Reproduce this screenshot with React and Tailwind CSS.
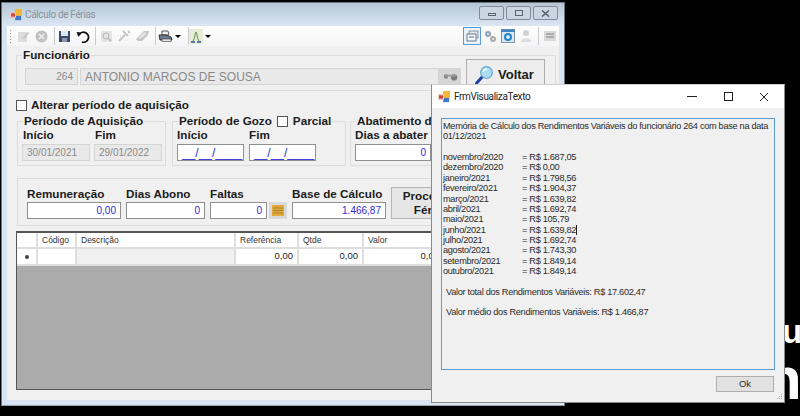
const months = [
  ['novembro/2020', '1.687,05'],
  ['dezembro/2020', '0,00'],
  ['janeiro/2021', '1.798,56'],
  ['fevereiro/2021', '1.904,37'],
  ['março/2021', '1.639,82'],
  ['abril/2021', '1.692,74'],
  ['maio/2021', '105,79'],
  ['junho/2021', '1.639,82'],
  ['julho/2021', '1.692,74'],
  ['agosto/2021', '1.743,30'],
  ['setembro/2021', '1.849,14'],
  ['outubro/2021', '1.849,14'],
]

const AppIcon = () => (
  <svg width="12" height="12" viewBox="0 0 14 14" className="shrink-0">
    <rect x="6" y="0" width="8" height="8" fill="#f2b632" />
    <rect x="0" y="4" width="7" height="6" fill="#d8433a" />
    <rect x="6" y="8" width="7" height="5" fill="#3f78c8" />
    <rect x="0.5" y="4.5" width="6" height="5" fill="none" stroke="#f3e9e0" strokeWidth="1" />
  </svg>
)

const Sep = ({ className = '' }) => <div className={`w-px h-[18px] bg-[#c8ccd0] shrink-0 ${className}`} />

const Arrow = ({ className = '' }) => (
  <div className={`w-0 h-0 border-x-[3px] border-x-transparent border-t-[3px] border-t-black shrink-0 ${className}`} />
)

const Slot = ({ w, children }) => (
  <div className="flex items-center justify-center h-full shrink-0" style={{ width: w }}>
    {children}
  </div>
)

const Toolbar = () => (
  <div className="h-5 flex items-center bg-gradient-to-b from-white to-[#f4f5f6] pl-[2px]">
    <div className="flex flex-col gap-[2px] ml-px shrink-0">
      {[0, 1, 2, 3, 4].map((i) => <div key={i} className="w-px h-px bg-[#8a8a8a]" />)}
    </div>
    <svg width="13" height="13" viewBox="0 0 13 13" className="ml-[6px] shrink-0"><rect x="1" y="2" width="9" height="10" fill="#dcdcdc" /><path d="M6 8 11 2l1 1-5 6z" fill="#bdbdbd" /></svg>
    <svg width="13" height="13" viewBox="0 0 13 13" className="ml-[5px] shrink-0"><circle cx="6.5" cy="6.5" r="6" fill="#c2c2c2" /><path d="M4 4l5 5M9 4l-5 5" stroke="#eee" strokeWidth="1.5" /></svg>
    <Sep className="ml-[6px]" />
    <svg width="13" height="13" viewBox="0 0 13 13" className="ml-[3px] shrink-0"><rect x="1" y="1" width="11" height="11" fill="#3b4a6b" /><rect x="3" y="1" width="7" height="5" fill="#dfe6f0" /><rect x="4" y="8" width="5" height="4" fill="#8c97ad" /></svg>
    <svg width="14" height="14" viewBox="0 0 14 14" fill="none" className="ml-[5px] shrink-0"><path d="M3 6 A5 5 0 1 1 6 13" stroke="#111" strokeWidth="1.8" /><path d="M0.5 3 L5.5 3.5 L2.5 8 Z" fill="#111" /></svg>
    <Sep className="ml-[5px]" />
    <svg width="13" height="13" viewBox="0 0 13 13" fill="none" className="ml-[4px] shrink-0"><rect x="1" y="1" width="11" height="11" fill="#e4e4e4" /><circle cx="6" cy="6" r="3" stroke="#b5b5b5" /><path d="M8 8l3 3" stroke="#b5b5b5" strokeWidth="1.5" /></svg>
    <svg width="15" height="14" viewBox="0 0 15 14" fill="none" className="ml-[4px] shrink-0"><path d="M2 12 8 6M6 2l5 5M11 2l2 2" stroke="#c6c6c6" strokeWidth="2" /><path d="M1 7h3M8 11h4" stroke="#d8d8d8" strokeDasharray="1 1" /></svg>
    <svg width="15" height="12" viewBox="0 0 15 12" className="ml-[3px] shrink-0"><path d="M1 9 9 1h5l-1 4-6 6H3z" fill="#c4c4c4" /><path d="M3 8l6-6 3 1-6 6z" fill="#e2e2e2" /></svg>
    <Sep className="ml-[5px]" />
    <svg width="15" height="14" viewBox="0 0 15 14" className="ml-[2px] shrink-0"><path d="M4 2h6l1 4H4z" fill="#eef2f7" stroke="#555" /><path d="M1 6h7l5 2 1 3H2z" fill="#6b7a90" stroke="#333" /><rect x="4" y="10" width="9" height="2.5" fill="#e8e8e8" stroke="#333" strokeWidth="0.6" /></svg>
    <Arrow className="ml-[2px]" />
    <Sep className="ml-[7px]" />
    <svg width="14" height="15" viewBox="0 0 14 15" fill="none" className="shrink-0"><rect x="0" y="0" width="14" height="15" fill="#e7ecd8" /><path d="M4 12C6 10 6 3 7 3s1 7 3 9" stroke="#5b8f3c" /><path d="M2 13h4M8 13h4" stroke="#2a4f9e" strokeWidth="1.5" /></svg>
    <Arrow className="ml-[2px]" />
    <div className="flex-1" />
    <div className="w-[18px] h-[18px] border border-[#5b9bd5] bg-[#eaf3fb] flex items-center justify-center shrink-0">
      <svg width="13" height="12" viewBox="0 0 13 12" fill="none"><rect x="3" y="1" width="9" height="7" fill="#e5e5e5" stroke="#8d98a5" /><rect x="1" y="4" width="9" height="7" fill="#f3f3f3" stroke="#6f7d8c" /><path d="M3 7h5" stroke="#3f78c8" /></svg>
    </div>
    <Slot w={18}>
      <svg width="13" height="13" viewBox="0 0 13 13"><circle cx="4" cy="4" r="3" fill="#8fa3b8" /><circle cx="4" cy="4" r="1" fill="#eef" /><circle cx="9" cy="9" r="3" fill="#a9a9a9" /><circle cx="9" cy="9" r="1" fill="#eee" /></svg>
    </Slot>
    <Slot w={18}>
      <svg width="14" height="14" viewBox="0 0 14 14" fill="none"><rect x="0.5" y="0.5" width="13" height="13" fill="#dce8f2" stroke="#7c93a8" /><rect x="0.5" y="0.5" width="13" height="2.5" fill="#3f86c6" /><circle cx="7" cy="8" r="3" stroke="#1f83c9" strokeWidth="2" /></svg>
    </Slot>
    <Slot w={18}>
      <svg width="12" height="14" viewBox="0 0 12 14"><circle cx="6" cy="4" r="3" fill="#d2d2d2" /><path d="M1 13c0-5 10-5 10 0z" fill="#dcdcdc" /></svg>
    </Slot>
    <Slot w={6}><Sep /></Slot>
    <Slot w={18}>
      <svg width="12" height="12" viewBox="0 0 12 12"><rect x="0" y="1" width="12" height="10" fill="#d8d8d8" /><path d="M2 4h8M2 7h8" stroke="#9d9d9d" strokeWidth="1.5" /></svg>
    </Slot>
  </div>
)

// campo de texto no estilo WinForms
const Field = ({ w, value, disabled, right, blue, size = 'text-[10px]', className = '' }) => (
  <div
    className={`h-[17px] shrink-0 flex items-center px-1 leading-none border whitespace-nowrap ${size} ${right ? 'justify-end' : ''} ${
      disabled ? 'bg-[#e9e9e9] border-[#d4d4d4] text-[#8a8a8a]' : 'bg-white border-[#8f8f8f]'
    } ${blue ? 'text-[#2b2bd6]' : ''} ${className}`}
    style={{ width: w }}
  >
    {value}
  </div>
)

const Group = ({ title, className, children }) => (
  <fieldset className={`border border-[#dcdcdc] rounded-[1px] min-w-0 shrink-0 ${className}`}>
    {title && <legend className="ml-[5px] px-px font-bold text-[11.7px] leading-[12px] text-[#1c1c1c] whitespace-nowrap">{title}</legend>}
    {children}
  </fieldset>
)

const Label = ({ className = '', children }) => (
  <div className={`font-bold text-[11.7px] leading-[14px] text-[#1c1c1c] whitespace-nowrap ${className}`}>{children}</div>
)

const Check = () => <div className="w-[11px] h-[11px] bg-white border border-[#555] shrink-0" />

const Cell = ({ w, children, className = '' }) => (
  <div className={`shrink-0 h-full flex items-center px-[4px] border-r-2 border-[#dedede] ${className}`} style={{ width: w }}>
    {children}
  </div>
)

const MainWindow = () => (
  <div className="absolute left-[1px] top-[2px] w-[564px] h-[404px] flex flex-col border border-[#6c7782] border-b-[#9aa4ae] overflow-hidden bg-[#d6e4f3] font-['Liberation_Sans',sans-serif] text-[#1c1c1c]">
    <div className="h-[23px] shrink-0 flex items-center pl-[8px] pr-[6px] bg-gradient-to-b from-[#b6c5d6] via-[#c8d6e4] to-[#dbe7f3]">
      <AppIcon />
      <span className="ml-[3px] text-[10px] tracking-[-0.35px] text-[#8c939a] font-['Roboto',sans-serif]">Cálculo de Férias</span>
      <div className="flex-1" />
      <div className="flex gap-[2px] -mt-[3px]">
        {['min', 'max', 'close'].map((b) => (
          <div key={b} className="w-[25px] h-[14px] border border-[#7f8c98] rounded-[2px] bg-[#c9d5e1] flex items-center justify-center">
            {b === 'min' && <div className="w-[8px] h-[3px] border border-[#5a6570] mt-[3px]" />}
            {b === 'max' && <div className="w-[8px] h-[6px] border border-[#5a6570]" />}
            {b === 'close' && (
              <svg width="9" height="7" viewBox="0 0 9 7"><path d="M1 0.5 8 6.5M8 0.5 1 6.5" stroke="#5a6570" strokeWidth="1.6" /></svg>
            )}
          </div>
        ))}
      </div>
    </div>
    <div className="flex-1 mx-[5px] mb-[5px] bg-[#f0f0f0] flex flex-col min-h-0">
      <Toolbar />

      <Group title="Funcionário" className="ml-[9px] mt-[3px] w-[540px] h-[42px]">
        <div className="flex items-start pl-[8px]">
          <Field w={53} value="264" disabled right className="mt-[7px]" />
          <Field w={359} value="ANTONIO MARCOS DE SOUSA" disabled size="text-[12px]" className="mt-[7px] ml-[2px]" />
          <div className="w-[22px] h-[17px] mt-[7px] bg-[#d6d6d6] flex items-center justify-center shrink-0">
            <svg width="17" height="9" viewBox="0 0 18 10"><circle cx="4" cy="5" r="2.5" fill="#8a8a8a" /><circle cx="13" cy="6" r="3.5" fill="#7c7c7c" /><path d="M3 3h12v2H3z" fill="#9a9a9a" /></svg>
          </div>
          <div className="ml-[5px] -mt-[2px] w-[79px] h-[32px] border border-[#aeaeae] bg-[#ededed] flex items-center pl-[7px] gap-[4px] font-bold text-[13px] shrink-0">
            <svg width="20" height="20" viewBox="0 0 24 24" fill="none" className="shrink-0">
              <path d="M3 22 10 14" stroke="#1e3fa8" strokeWidth="3.5" strokeLinecap="round" />
              <circle cx="15" cy="9" r="7" fill="#a9def2" stroke="#6aa7c9" strokeWidth="1.5" />
              <path d="M11 8a5 5 0 0 1 5-3" stroke="#fff" strokeWidth="1.5" />
            </svg>
            Voltar
          </div>
        </div>
      </Group>

      <div className="ml-[9px] mt-[8px] flex items-center gap-[4px] h-[12px]">
        <Check />
        <Label>Alterar período de aquisição</Label>
      </div>

      <div className="ml-[10px] mt-[4px] flex items-start gap-[6px]">
        <Group title="Período de Aquisição" className="w-[149px] h-[51px]">
          <div className="flex gap-[4px] mt-px px-[4px]">
            <div>
              <Label className="w-[68px] pl-px">Início</Label>
              <Field w={68} value="30/01/2021" disabled className="mt-[2px]" />
            </div>
            <div>
              <Label className="pl-px">Fim</Label>
              <Field w={68} value="29/01/2022" disabled className="mt-[2px]" />
            </div>
          </div>
        </Group>
        <Group className="w-[174px] h-[45px] mt-[6px] relative">
          <div className="absolute -top-[8px] left-[5px] px-px bg-[#f0f0f0] flex items-center gap-[5px]">
            <Label>Período de Gozo</Label>
            <Check />
            <Label>Parcial</Label>
          </div>
          <div className="flex gap-[5px] mt-[6px] px-[4px]">
            <div>
              <Label>Início</Label>
              <Field w={67} value="__/__/____" blue size="text-[12px]" className="mt-[2px]" />
            </div>
            <div>
              <Label>Fim</Label>
              <Field w={67} value="__/__/____" blue size="text-[12px]" className="mt-[2px]" />
            </div>
          </div>
        </Group>
        <Group title="Abatimento de Férias" className="w-[190px] h-[51px] -ml-[2px]">
          <div className="mt-px px-[4px]">
            <Label>Dias a abater</Label>
            <Field w={76} value="0" right blue className="mt-[2px]" />
          </div>
        </Group>
      </div>

      <div className="ml-[10px] mt-[12px] w-[530px] h-[48px] border border-[#dcdcdc] flex items-start pt-[8px] pl-[9px] shrink-0">
        <div className="mr-[5px]"><Label>Remuneração</Label><Field w={94} value="0,00" right blue className="mt-[1px]" /></div>
        <div className="mr-[5px]"><Label>Dias Abono</Label><Field w={79} value="0" right blue className="mt-[1px]" /></div>
        <div className="mr-[2px]"><Label>Faltas</Label><Field w={57} value="0" right blue className="mt-[1px]" /></div>
        <div className="mr-[5px] pt-[15px]">
          <div className="w-[18px] h-[17px] bg-[#d9d9d9] flex items-center justify-center">
            <svg width="14" height="13" viewBox="0 0 14 13"><rect x="1" y="1" width="12" height="11" fill="#e0a93a" /><path d="M2 4h10M2 6.5h10M2 9h10" stroke="#a9812c" /></svg>
          </div>
        </div>
        <div className="mr-[5px]"><Label>Base de Cálculo</Label><Field w={94} value="1.466,87" right blue className="mt-[1px]" /></div>
        <div className="w-[80px] h-[32px] border border-[#b5b5b5] bg-[#e6e6e6] flex items-center justify-center text-center font-bold text-[11.7px] leading-[14px] shrink-0">
          Processar Férias
        </div>
      </div>

      <div className="ml-[9px] mt-[5px] w-[530px] h-[159px] border border-[#555] border-t-2 bg-[#ababab] overflow-hidden shrink-0">
        <div className="h-[16px] bg-white flex text-[8.5px] text-[#333] border-b-2 border-[#dedede]">
          <Cell w={21} />
          <Cell w={39}>Código</Cell>
          <Cell w={159}>Descrição</Cell>
          <Cell w={63}>Referência</Cell>
          <Cell w={65}>Qtde</Cell>
          <Cell w={81}>Valor</Cell>
        </div>
        <div className="h-[17px] bg-white flex text-[9.5px] border-b-2 border-[#dedede]">
          <Cell w={21} className="justify-center"><div className="w-[4px] h-[4px] rounded-full bg-[#444]" /></Cell>
          <Cell w={39} />
          <Cell w={159} className="bg-[#f0f0f0]" />
          <Cell w={63} className="justify-end">0,00</Cell>
          <Cell w={65} className="justify-end">0,00</Cell>
          <Cell w={81} className="justify-end">0,00</Cell>
        </div>
      </div>
    </div>
  </div>
)

const DialogWindow = () => (
  <div className="absolute left-[431px] top-[84px] w-[354px] h-[319px] flex flex-col bg-[#f0f0f0] border border-[#8a8a8a] border-t-[#cfcfcf] font-['Liberation_Sans',sans-serif] text-[#2a2a2a]">
    <div className="h-[23px] shrink-0 bg-white flex items-center pl-[6px] text-[#222]">
      <AppIcon />
      <span className="ml-[4px] text-[10px] tracking-[-0.35px] font-['Roboto',sans-serif]">FrmVisualizaTexto</span>
      <div className="flex-1" />
      <div className="flex items-center">
        <div className="w-[36px] flex justify-center"><div className="w-[10px] h-px bg-[#222]" /></div>
        <div className="w-[36px] flex justify-center"><div className="w-[9px] h-[9px] border border-[#222]" /></div>
        <div className="w-[36px] flex justify-center mr-[2px]">
          <svg width="10" height="10" viewBox="0 0 10 10"><path d="M1 1l8 8M9 1l-8 8" stroke="#222" strokeWidth="1" /></svg>
        </div>
      </div>
    </div>
    <div className="ml-[9px] mt-[10px] w-[334px] h-[252px] border border-[#5b9bd5] pl-[1px] pt-[2px] text-[9.2px] tracking-[-0.3px] leading-[10.36px]">
      <div className="w-[326px]">Memória de Cálculo dos Rendimentos Variáveis do funcionário 264 com base na data 01/12/2021</div>
      <div className="h-[10.36px]" />
      {months.map(([m, v]) => (
        <div key={m} className="flex h-[10.36px]">
          <div className="w-[79px] shrink-0">{m}</div>
          <div>= R$ {v}{m === 'junho/2021' && <span className="inline-block w-px h-[10px] bg-[#222] align-top" />}</div>
        </div>
      ))}
      <div className="h-[10.36px]" />
      <div className="pl-[3px]">Valor total dos Rendimentos Variáveis: R$ 17.602,47</div>
      <div className="h-[10.36px]" />
      <div className="pl-[3px]">Valor médio dos Rendimentos Variáveis: R$ 1.466,87</div>
    </div>
    <div className="flex justify-end mt-[6px] mr-[10px]">
      <div className="w-[58px] h-[16px] border border-[#adadad] bg-[#e1e1e1] flex items-center justify-center text-[9.5px]">Ok</div>
    </div>
    <svg width="7" height="7" viewBox="0 0 7 7" className="absolute right-[1px] bottom-[1px]" fill="#a8a8a8">
      <rect x="5" y="0" width="1" height="1" /><rect x="3" y="2" width="1" height="1" /><rect x="5" y="2" width="1" height="1" />
      <rect x="1" y="4" width="1" height="1" /><rect x="3" y="4" width="1" height="1" /><rect x="5" y="4" width="1" height="1" />
    </svg>
  </div>
)

export default function App() {
  return (
    <div className="relative w-[800px] h-[416px] bg-black overflow-hidden font-['Liberation_Sans',sans-serif]">
      {/* restos do papel de parede atras das janelas */}
      <div className="absolute left-[782px] top-[315px] text-white font-bold text-[33px] leading-[33px]">u</div>
      <div className="absolute left-[765px] top-[349px] text-white font-bold text-[60px] leading-[60px]">n</div>
      <MainWindow />
      <DialogWindow />
    </div>
  )
}
